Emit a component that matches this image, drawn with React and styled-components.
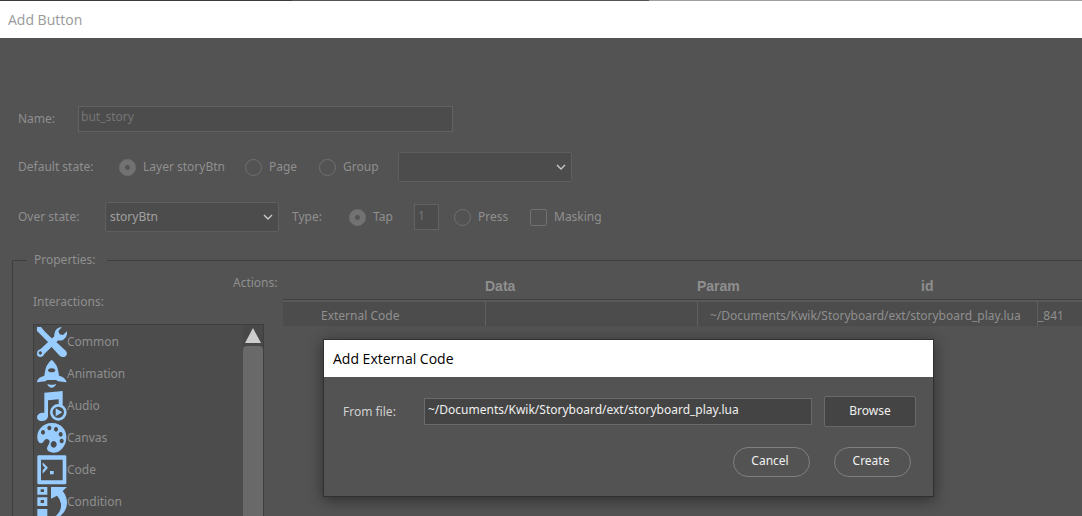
import React from "react";
import styled, { createGlobalStyle } from "styled-components";

const Global = createGlobalStyle`
  * { box-sizing: border-box; }
  body {
    margin: 0;
    background: #535353;
    color: #8f8f8f;
    font: 12px/16px "Noto Sans", sans-serif;
    overflow: hidden;
  }
  button, input, select { font: inherit; color: inherit; margin: 0; }
`;

const Page = styled.main`
  position: relative;
  display: flex;
  flex-direction: column;
  height: 100vh;
  overflow: hidden;
`;

const WindowEdge = styled.div`
  flex: none;
  height: 1px;
  background: linear-gradient(90deg, #3d3a3d 27%, #535353 27% 60%, #a0a0a0 60%);
`;

const TitleBar = styled.header`
  display: flex;
  align-items: center;
  flex: none;
  height: 37px;
  padding: 0 ${(p) => (p.$active ? 9 : 8)}px;
  background: #fff;
  color: ${(p) => (p.$active ? "#000" : "#999")};
`;

const Title = styled.h1`
  margin: 0;
  font: 400 14px/20px "Open Sans", sans-serif;
`;

const Form = styled.form`
  display: flex;
  flex-direction: column;
  flex: 1;
  min-height: 0;
  padding-top: 64px;
`;

const Row = styled.div`
  display: flex;
  align-items: center;
  flex: none;
  height: ${(p) => p.$height}px;
  padding-left: 18px;
`;

const FieldLabel = styled.label`
  flex: none;
  width: ${(p) => p.$width}px;
`;

const TextInput = styled.input`
  width: ${(p) => p.$width}px;
  height: 26px;
  padding: 0 2px 5px;
  border: 1px solid #626262;
  border-radius: 0;
  background: #4c4c4c;
  color: #757575;
  outline: none;
`;

const CountInput = styled(TextInput)`
  margin-right: 15px;
  padding: 0 3px 3px;
`;

const SelectWrap = styled.div`
  display: grid;
  flex: none;
  width: 174px;
  margin-right: 13px;
  align-items: center;

  > * { grid-area: 1 / 1; }
  > svg { justify-self: end; margin-right: 5px; pointer-events: none; }
`;

const SelectBox = styled.select`
  appearance: none;
  width: 100%;
  height: 30px;
  padding: 0 24px 0 4px;
  border: 1px solid #5e5e5e;
  border-radius: 2px;
  background: #4c4c4c;
  color: #a0a0a0;
`;

const Choice = styled.label`
  display: flex;
  align-items: center;
  flex: none;
  gap: 7px;
  width: ${(p) => p.$width}px;
`;

const Radio = styled.input.attrs({ type: "radio" })`
  appearance: none;
  flex: none;
  width: 17px;
  height: 17px;
  border: 1px solid #707070;
  border-radius: 50%;

  &:checked {
    background: radial-gradient(circle, #555 2px, #727272 3px);
  }
`;

const Checkbox = styled.input.attrs({ type: "checkbox" })`
  appearance: none;
  flex: none;
  width: 17px;
  height: 17px;
  border: 1px solid #707070;
  border-radius: 2px;
`;

const Properties = styled.fieldset`
  display: flex;
  flex: 1;
  min-width: 0;
  min-height: 0;
  margin: 16px 0 0 12px;
  padding: 0 0 0 20px;
  border: solid #3e3e3e;
  border-width: 1px 0 0 1px;
`;

const Legend = styled.legend`
  width: 80px;
  margin-left: -6px;
  padding: 0 7px;
`;

const Interactions = styled.section`
  display: flex;
  flex-direction: column;
  flex: none;
  width: 231px;
  padding-top: 26px;
`;

const Caption = styled.h2`
  margin: 0;
  font: inherit;
`;

const ListBox = styled.div`
  display: flex;
  flex: 1;
  min-height: 0;
  margin-top: 14px;
  border: solid #3e3e3e;
  border-width: 1px 1px 0;
  background: #4c4c4c;
  overflow: hidden;
`;

const List = styled.ul`
  flex: 1;
  margin: 0;
  padding: 1px 0 0 3px;
  list-style: none;
`;

const Item = styled.li`
  display: flex;
  align-items: center;
  height: 32px;

  svg { flex: none; }
`;

const Scrollbar = styled.div`
  display: flex;
  flex-direction: column;
  align-items: center;
  width: 20px;
  background: #484848;
`;

const Thumb = styled.div`
  flex: 1;
  width: 100%;
  margin-top: 3px;
  border-radius: 4px 4px 0 0;
  background: #696969;
`;

const Actions = styled.section`
  flex: 1;
  min-width: 0;
  display: flex;
  align-items: flex-start;
`;

const ActionsCaption = styled(Caption)`
  flex: none;
  width: 50px;
  margin-left: -31px;
  padding-top: 7px;
`;

const Table = styled.table`
  flex: 1;
  min-width: 0;
  width: 100%;
  table-layout: fixed;
  border-collapse: separate;
  border-spacing: 0;

  th {
    height: 32px;
    padding: 5px 0 0;
    border-bottom: 1px solid #3e3e3e;
    text-align: left;
    font: 700 14px/16px "Liberation Sans", sans-serif;
  }
  td {
    height: 26px;
    padding: 4px 0 0 12px;
    border-top: 2px solid #595959;
    border-left: 1px solid #606060;
    background: #4c4c4c;
    white-space: nowrap;
  }
  td:first-child { padding-left: 38px; border-left: 0; }
  td:last-child { padding-left: 0; }
`;

const Dialog = styled.section`
  position: absolute;
  left: 323px;
  top: 339px;
  width: 611px;
  border: 1px solid #303030;
  background: #535353;
  color: #d0d0d0;
  box-shadow: 0 3px 14px rgba(0, 0, 0, 0.45);
`;

const DialogBody = styled.form`
  display: flex;
  flex-direction: column;
  gap: 20px;
  padding: 19px 17px 19px 19px;
`;

const FileRow = styled.div`
  display: flex;
  align-items: center;
`;

const FileInput = styled(TextInput)`
  flex: 1;
  min-width: 0;
  height: 27px;
  margin-right: 12px;
  padding: 0 3px 4px;
  border-color: #6a6a6a;
  background: #444;
  color: #f0f0f0;
`;

const BrowseButton = styled.button`
  width: 92px;
  height: 31px;
  padding: 0 0 2px;
  border: 1px solid #696969;
  border-radius: 2px;
  background: #444;
  color: #f0f0f0;
`;

const Buttons = styled.div`
  display: flex;
  justify-content: flex-end;
  gap: 24px;
  padding-right: 5px;
`;

const PillButton = styled.button`
  width: 77px;
  height: 30px;
  padding: 0 3px 3px 0;
  border: 1px solid #808080;
  border-radius: 15px;
  background: transparent;
  color: #f0f0f0;
`;

const Chevron = () => (
  <svg width="12" height="8" viewBox="0 0 12 8" fill="none" stroke="#c8c8c8" strokeWidth="1.4" aria-hidden="true">
    <path d="M2 2l4 4 4-4" />
  </svg>
);

const Icon = ({ children }) => (
  <svg width="30" height="30" viewBox="0 0 90 90" fill="#99ccff" aria-hidden="true">
    {children}
  </svg>
);

const INTERACTIONS = [
  ["Common", (
    <>
      <path d="M0 0 12 0 22 12 50 40 57 44 87 72Q94 83 84 89 75 92 68 86L41 57 38 50 10 22 0 12Z" />
      <path fillRule="evenodd" d="M75 0 64 12 68 22 78 24 90 13Q92 31 79 38 71 42 64 40L22 81Q19 90 9 90-1 89 0 79 1 69 10 67L52 28Q50 13 60 5 66 0 75 0ZM10 73a5 5 0 1 0 .1 0Z" />
    </>
  )],
  ["Animation", (
    <>
      <path fillRule="evenodd" d="M44 2Q62 16 65 43L66 50Q86 55 89 70L63 67 57 63H31L25 67-1 70Q2 55 22 50L23 43Q26 16 44 2ZM44 28C35 28 33 32 33 36 38 41 50 41 55 36 55 31 52 28 44 28Z" />
      <path d="M31 74Q44 81 57 74L55 80Q44 92 33 80Z" />
    </>
  )],
  ["Audio", (
    <>
      <path d="M22 5 77 0V46Q71 42 65 42V25L33 28V76Q32 88 17 90 2 92 0 79 0 68 14 65L22 65Z" />
      <circle cx="64" cy="64" r="21" fill="#4c4c4c" stroke="#99ccff" strokeWidth="8" />
      <path d="M56 52 76 64 56 76Z" />
    </>
  )],
  ["Canvas", (
    <path fillRule="evenodd" d="M43 0C70-1 89 18 88 44 87 71 69 90 48 89 34 88 27 81 31 72 34 64 42 57 35 50 28 44 22 51 18 58 12 65 4 59 2 51-4 24 16 1 43 0ZM18 21a6 7 0 1 0 .1 0ZM37 8a6 7 0 1 0 .1 0ZM57 12a6 7 0 1 0 .1 0ZM71 27a6 7 0 1 0 .1 0ZM74 47a6 7 0 1 0 .1 0ZM50 54a9 10 0 1 0 .1 0Z" />
  )],
  ["Code", (
    <>
      <path fillRule="evenodd" d="M5 1H84Q88 1 88 5V84Q88 88 84 88H5Q1 88 1 84V5Q1 1 5 1ZM12 14V76H77V14Z" />
      <path d="M17 22 33 38 17 56V46L24 38 17 31ZM39 48H50V58H39Z" />
    </>
  )],
  ["Condition", (
    <>
      <path fillRule="evenodd" d="M1 0H31V23H1ZM11 7V15H21V7ZM1 31H31V57H1ZM11 39V48H21V39ZM1 66H31V90H1Z" />
      <path d="M42 0H90L77 12Q90 28 90 48 89 75 66 90H52Q74 75 72 50 70 36 60 26L42 35Z" />
    </>
  )],
];

function Select({ id, value }) {
  return (
    <SelectWrap>
      <SelectBox id={id} aria-label={id === "page" ? "Target" : undefined} defaultValue={value}>
        <option>{value}</option>
      </SelectBox>
      <Chevron />
    </SelectWrap>
  );
}

export default function App() {
  return (
    <Page>
      <Global />
      <WindowEdge />
      <TitleBar>
        <Title>Add Button</Title>
      </TitleBar>
      <Form>
        <Row $height={34}>
          <FieldLabel $width={60} htmlFor="name">Name:</FieldLabel>
          <TextInput $width={375} id="name" defaultValue="but_story" />
        </Row>
        <Row $height={62}>
          <FieldLabel as="span" $width={101}>Default state:</FieldLabel>
          <Choice $width={126}><Radio name="state" defaultChecked />Layer storyBtn</Choice>
          <Choice $width={74}><Radio name="state" />Page</Choice>
          <Choice $width={79}><Radio name="state" />Group</Choice>
          <Select id="page" value="" />
        </Row>
        <Row $height={38}>
          <FieldLabel $width={87} htmlFor="over">Over state:</FieldLabel>
          <Select id="over" value="storyBtn" />
          <FieldLabel as="span" $width={57}>Type:</FieldLabel>
          <Choice $width={65}><Radio name="type" defaultChecked />Tap</Choice>
          <CountInput $width={25} aria-label="Taps" defaultValue="1" />
          <Choice $width={76}><Radio name="type" />Press</Choice>
          <Choice $width={90}><Checkbox />Masking</Choice>
        </Row>
        <Properties>
          <Legend>Properties:</Legend>
          <Interactions>
            <Caption>Interactions:</Caption>
            <ListBox>
              <List>
                {INTERACTIONS.map(([name, art]) => (
                  <Item key={name}><Icon>{art}</Icon>{name}</Item>
                ))}
              </List>
              <Scrollbar>
                <svg width="16" height="18" viewBox="0 0 16 18" fill="#cdcdcd" aria-hidden="true">
                  <path d="M8 3 16 18H0Z" />
                </svg>
                <Thumb />
              </Scrollbar>
            </ListBox>
          </Interactions>
          <Actions>
            <ActionsCaption>Actions:</ActionsCaption>
            <Table>
              <colgroup>
                <col width="202" />
                <col width="212" />
                <col width="224" />
                <col width="116" />
                <col />
              </colgroup>
              <thead>
                <tr>
                  <th />
                  <th>Data</th>
                  <th>Param</th>
                  <th colSpan={2}>id</th>
                </tr>
              </thead>
              <tbody>
                <tr>
                  <td>External Code</td>
                  <td />
                  <td colSpan={2}>~/Documents/Kwik/Storyboard/ext/storyboard_play.lua</td>
                  <td>_841</td>
                </tr>
              </tbody>
            </Table>
          </Actions>
        </Properties>
      </Form>
      <Dialog role="dialog" aria-labelledby="dialog-title">
        <TitleBar $active>
          <Title as="h2" id="dialog-title">Add External Code</Title>
        </TitleBar>
        <DialogBody>
          <FileRow>
            <FieldLabel $width={81} htmlFor="file">From file:</FieldLabel>
            <FileInput id="file" defaultValue="~/Documents/Kwik/Storyboard/ext/storyboard_play.lua" />
            <BrowseButton type="button">Browse</BrowseButton>
          </FileRow>
          <Buttons>
            <PillButton type="button">Cancel</PillButton>
            <PillButton type="button">Create</PillButton>
          </Buttons>
        </DialogBody>
      </Dialog>
    </Page>
  );
}
